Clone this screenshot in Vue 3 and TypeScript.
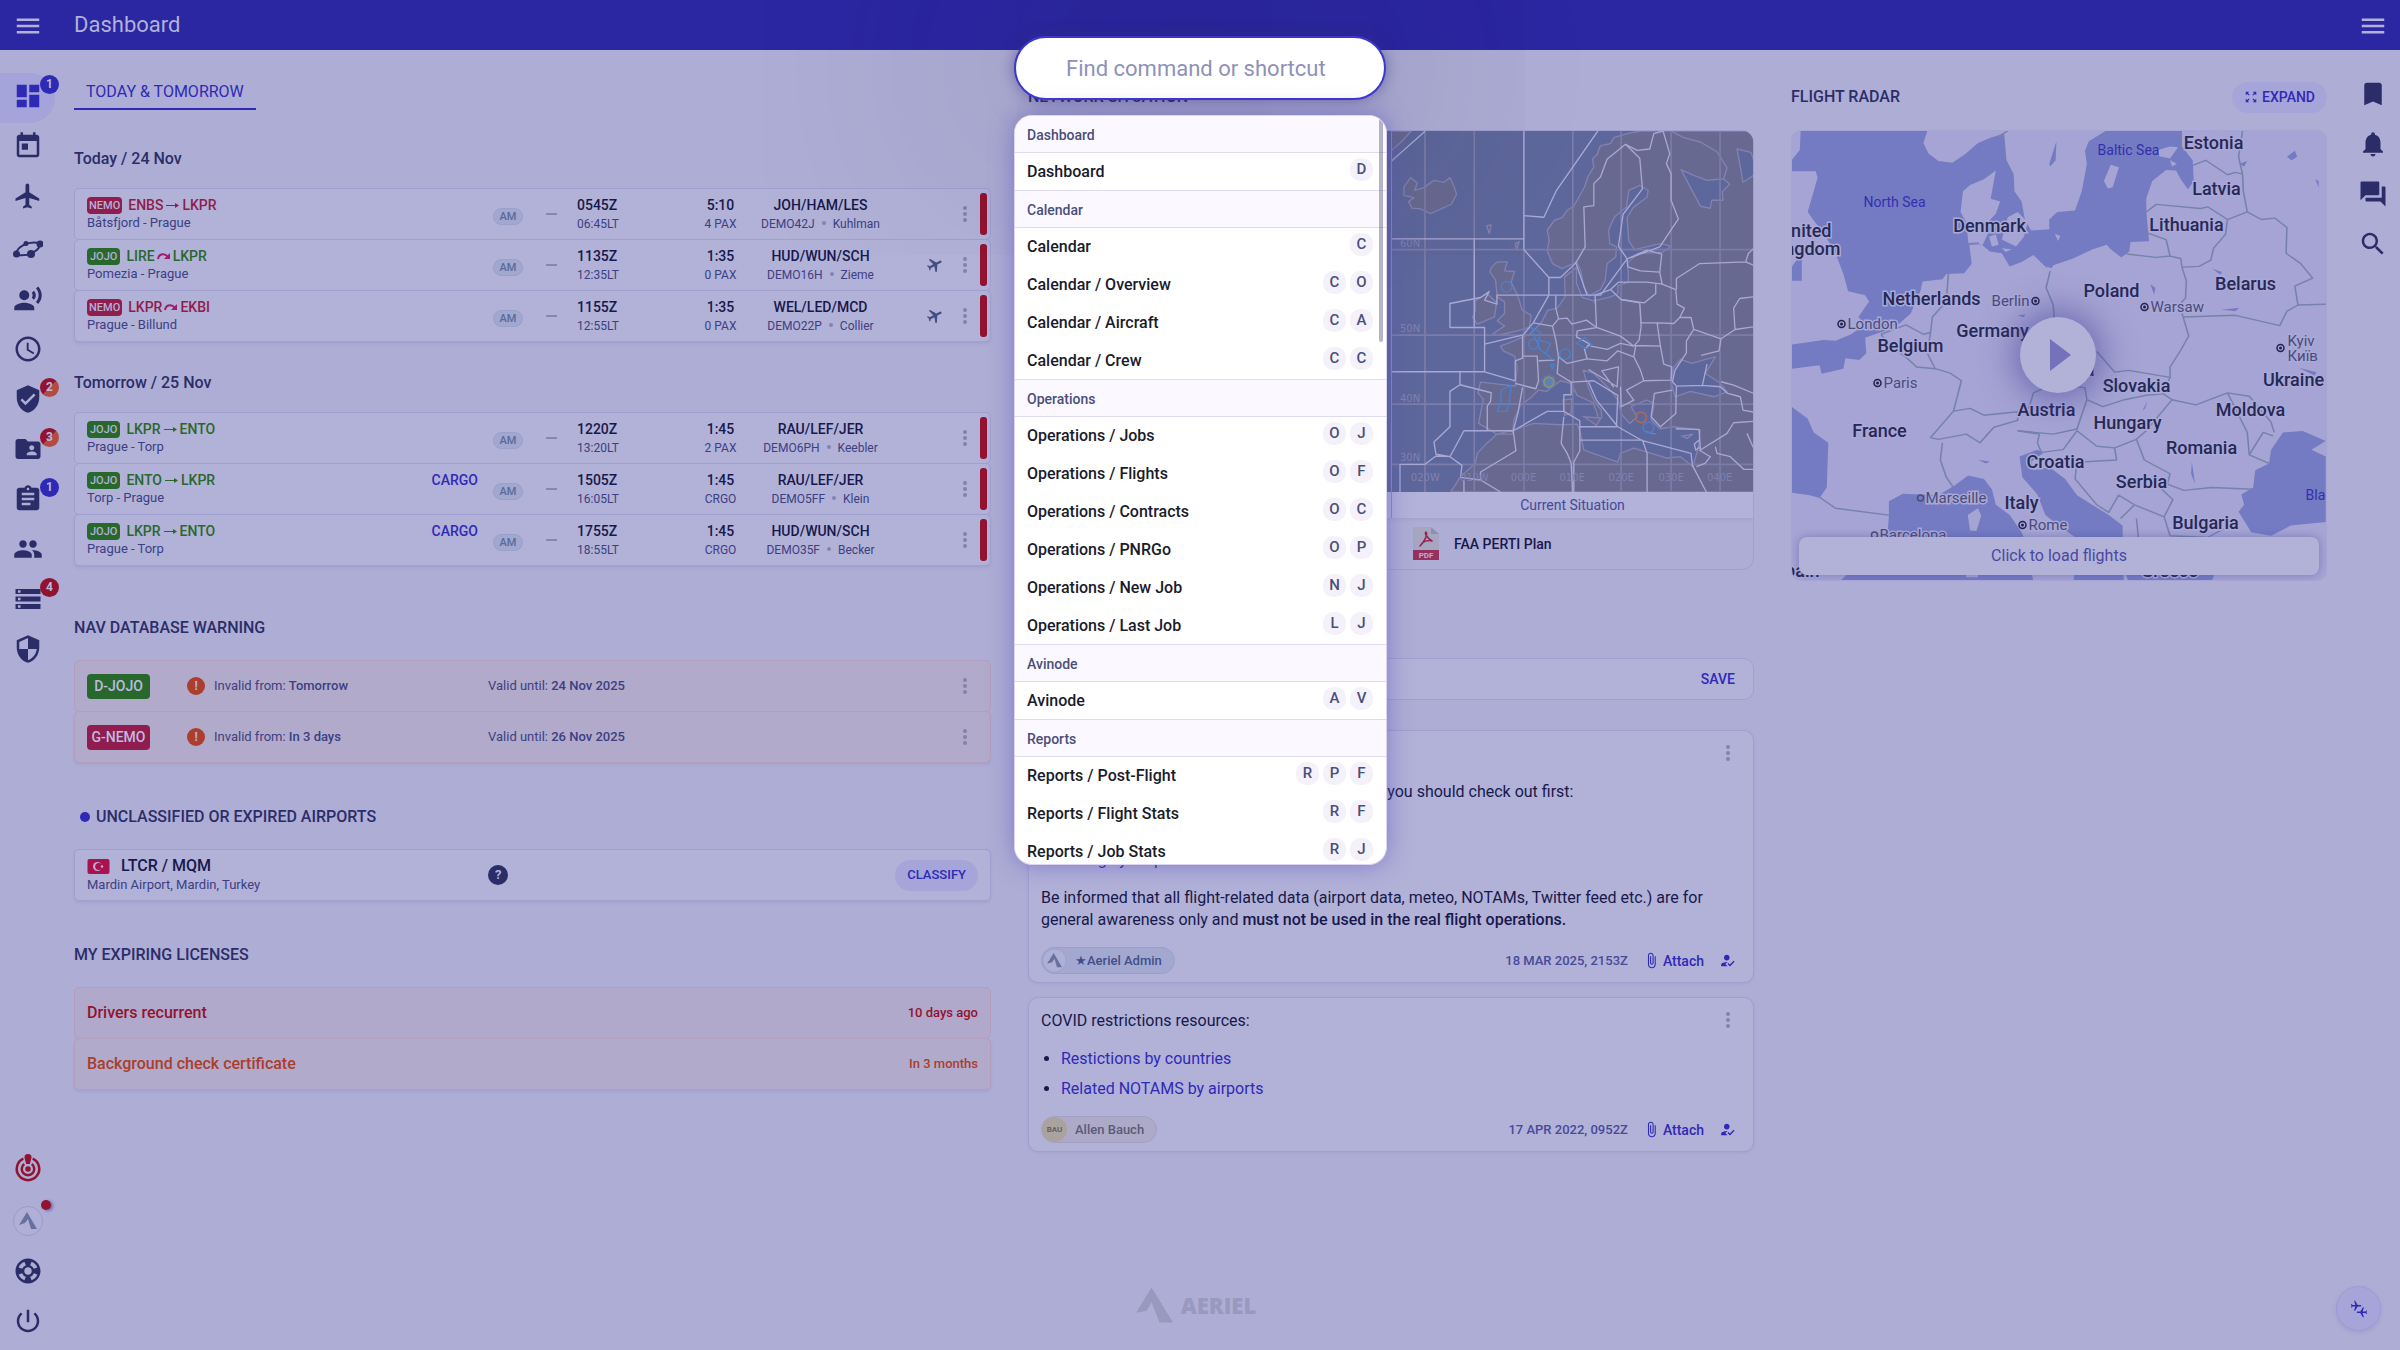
<script setup lang="ts">
import { ref } from 'vue'

interface NavItem { label: string; icon: string; badge?: string; tone?: string; active?: boolean; tall?: boolean }
interface Flight {
  tail: string; from: string; to: string; hop?: boolean; route: string; cargo?: boolean
  utc: string; local: string; length: string; load: string; crew: string; call: string; captain: string; plane?: boolean
}
interface Day { title: string; flights: Flight[] }
interface Command { label: string; keys: string[] }
interface Group { title: string; items: Command[] }
interface Label { text: string; x: number; y: number; kind: string; anchor?: 'start' | 'middle' | 'end' }

const query = ref('')

const icons: Record<string, string> = {
  menu: 'M3 18h18v-2H3v2zm0-5h18v-2H3v2zm0-7v2h18V6H3z',
  dashboard: 'M3 13h8V3H3v10zm0 8h8v-6H3v6zm10 0h8V11h-8v10zm0-18v6h8V3h-8z',
  today: 'M19 3h-1V1h-2v2H8V1H6v2H5c-1.11 0-1.99.9-1.99 2L3 19c0 1.1.89 2 2 2h14c1.1 0 2-.9 2-2V5c0-1.1-.9-2-2-2zm0 16H5V8h14v11zM7 10h5v5H7z',
  flight: 'M21 16v-2l-8-5V3.5c0-.83-.67-1.5-1.5-1.5S10 2.67 10 3.5V9l-8 5v2l8-2.5V19l-2 1.5V22l3.5-1 3.5 1v-1.5L13 19v-5.5l8 2.5z',
  voice: 'M9 5a4 4 0 1 0 0 8 4 4 0 0 0 0-8zM9 15c-2.67 0-8 1.34-8 4v2h16v-2c0-2.66-5.33-4-8-4zm7.76-9.64l-1.68 1.69c.84 1.18.84 2.71 0 3.89l1.68 1.69c2.02-2.02 2.02-5.07 0-7.27zM20.07 2l-1.63 1.63c2.77 3.02 2.77 7.56 0 10.74L20.07 16c3.9-3.89 3.91-9.95 0-14z',
  clock: 'M11.99 2C6.47 2 2 6.48 2 12s4.47 10 9.99 10C17.52 22 22 17.52 22 12S17.52 2 11.99 2zM12 20c-4.42 0-8-3.58-8-8s3.58-8 8-8 8 3.58 8 8-3.58 8-8 8zm.5-13H11v6l5.25 3.15.75-1.23-4.5-2.67z',
  verified: 'M12 1L3 5v6c0 5.55 3.84 10.74 9 12 5.16-1.26 9-6.45 9-12V5l-9-4zm-2 16l-4-4 1.41-1.41L10 14.17l6.59-6.59L18 9l-8 8z',
  folder: 'M20 6h-8l-2-2H4c-1.1 0-1.99.9-1.99 2L2 18c0 1.1.9 2 2 2h16c1.1 0 2-.9 2-2V8c0-1.1-.9-2-2-2zm-5 3c1.1 0 2 .9 2 2s-.9 2-2 2-2-.9-2-2 .9-2 2-2zm4 8h-8v-1c0-1.33 2.67-2 4-2s4 .67 4 2v1z',
  tasks: 'M19 3h-4.18C14.4 1.84 13.3 1 12 1c-1.3 0-2.4.84-2.82 2H5c-1.1 0-2 .9-2 2v14c0 1.1.9 2 2 2h14c1.1 0 2-.9 2-2V5c0-1.1-.9-2-2-2zm-7 0c.55 0 1 .45 1 1s-.45 1-1 1-1-.45-1-1 .45-1 1-1zm2 14H7v-2h7v2zm3-4H7v-2h10v2zm0-4H7V7h10v2z',
  people: 'M16 11c1.66 0 2.99-1.34 2.99-3S17.66 5 16 5c-1.66 0-3 1.34-3 3s1.34 3 3 3zm-8 0c1.66 0 2.99-1.34 2.99-3S9.66 5 8 5C6.34 5 5 6.34 5 8s1.34 3 3 3zm0 2c-2.33 0-7 1.17-7 3.5V19h14v-2.5c0-2.33-4.67-3.5-7-3.5zm8 0c-.29 0-.62.02-.97.05 1.16.84 1.97 1.97 1.97 3.45V19h6v-2.5c0-2.33-4.67-3.5-7-3.5z',
  storage: 'M2 20h20v-4H2v4zm2-3h2v2H4v-2zM2 4v4h20V4H2zm4 3H4V5h2v2zm-4 7h20v-4H2v4zm2-3h2v2H4v-2z',
  security: 'M12 1L3 5v6c0 5.55 3.84 10.74 9 12 5.16-1.26 9-6.45 9-12V5l-9-4zm0 10.99h7c-.53 4.12-3.28 7.79-7 8.94V12H5V6.3l7-3.11v8.8z',
  bookmark: 'M17 3H7c-1.1 0-1.99.9-1.99 2L5 21l7-3 7 3V5c0-1.1-.9-2-2-2z',
  bell: 'M12 22c1.1 0 2-.9 2-2h-4c0 1.1.89 2 2 2zm6-6v-5c0-3.07-1.64-5.64-4.5-6.32V4c0-.83-.67-1.5-1.5-1.5s-1.5.67-1.5 1.5v.68C7.63 5.36 6 7.92 6 11v5l-2 2v1h16v-1l-2-2z',
  chat: 'M21 6h-2v9H6v2c0 .55.45 1 1 1h11l4 4V7c0-.55-.45-1-1-1zm-4 6V3c0-.55-.45-1-1-1H3c-.55 0-1 .45-1 1v14l4-4h10c.55 0 1-.45 1-1z',
  search: 'M15.5 14h-.79l-.28-.27C15.41 12.59 16 11.11 16 9.5 16 5.91 13.09 3 9.5 3S3 5.91 3 9.5 5.91 16 9.5 16c1.61 0 3.09-.59 4.23-1.57l.27.28v.79l5 4.99L20.49 19l-4.99-5zm-6 0C7.01 14 5 11.99 5 9.5S7.01 5 9.5 5 14 7.01 14 9.5 11.99 14 9.5 14z',
  power: 'M13 3h-2v10h2V3zm4.83 2.17l-1.42 1.42C17.99 7.86 19 9.81 19 12c0 3.87-3.13 7-7 7s-7-3.13-7-7c0-2.19 1.01-4.14 2.58-5.42L6.17 5.17C4.23 6.82 3 9.26 3 12c0 4.97 4.03 9 9 9s9-4.03 9-9c0-2.74-1.23-5.18-3.17-6.83z',
  help: 'M12 2C6.48 2 2 6.48 2 12s4.48 10 10 10 10-4.48 10-10S17.52 2 12 2zm7.46 7.12l-2.78 1.15a4.98 4.98 0 0 0-2.95-2.94l1.15-2.78c2.1.8 3.77 2.47 4.58 4.57zM12 15c-1.66 0-3-1.34-3-3s1.34-3 3-3 3 1.34 3 3-1.34 3-3 3zM9.13 4.54l1.17 2.78a5 5 0 0 0-2.98 2.97L4.54 9.13a7.98 7.98 0 0 1 4.59-4.59zM4.54 14.87l2.78-1.15a4.97 4.97 0 0 0 2.97 2.96l-1.17 2.78a7.96 7.96 0 0 1-4.58-4.59zm10.34 4.59l-1.15-2.78a4.98 4.98 0 0 0 2.95-2.97l2.78 1.17a7.96 7.96 0 0 1-4.58 4.58z',
  expand: 'M15 3l2.3 2.3-2.89 2.87 1.42 1.42L18.7 6.7 21 9V3zM3 9l2.3-2.3 2.87 2.89 1.42-1.42L6.7 5.3 9 3H3zm6 12l-2.3-2.3 2.89-2.87-1.42-1.42L5.3 17.3 3 15v6zm12-6l-2.3 2.3-2.87-2.89-1.42 1.42 2.89 2.87L15 21h6z',
  clip: 'M16.5 6v11.5c0 2.21-1.79 4-4 4s-4-1.79-4-4V5a2.5 2.5 0 0 1 5 0v10.5c0 .55-.45 1-1 1s-1-.45-1-1V6H10v9.5a2.5 2.5 0 0 0 5 0V5c0-2.21-1.79-4-4-4S7 2.79 7 5v12.5c0 3.04 2.46 5.5 5.5 5.5s5.5-2.46 5.5-5.5V6h-1.5z',
  assign: 'M9 17l3-2.94c-.39-.04-.68-.06-1-.06-2.67 0-8 1.34-8 4v2h9l-3-3zm2-5c2.21 0 4-1.79 4-4s-1.79-4-4-4-4 1.79-4 4 1.79 4 4 4zM15.47 20.5L12 17l1.4-1.41 2.07 2.08 5.13-5.17 1.4 1.41z',
}

const nav: NavItem[] = [
  { label: 'Dashboard', icon: 'dashboard', badge: '1', tone: 'blue', active: true },
  { label: 'Calendar', icon: 'today' },
  { label: 'Flights', icon: 'flight' },
  { label: 'Rotations', icon: 'orbit', tall: true },
  { label: 'Crew briefing', icon: 'voice' },
  { label: 'Duty times', icon: 'clock' },
  { label: 'Compliance', icon: 'verified', badge: '2', tone: 'split' },
  { label: 'Documents', icon: 'folder', badge: '3', tone: 'split' },
  { label: 'Tasks', icon: 'tasks', badge: '1', tone: 'blue' },
  { label: 'Contacts', icon: 'people' },
  { label: 'Database', icon: 'storage', badge: '4', tone: 'red' },
  { label: 'Security', icon: 'security' },
]
const tools = [
  { label: 'Bookmarks', icon: 'bookmark' },
  { label: 'Notifications', icon: 'bell' },
  { label: 'Messages', icon: 'chat' },
  { label: 'Search', icon: 'search' },
]

const days: Day[] = [
  {
    title: 'Today / 24 Nov',
    flights: [
      { tail: 'NEMO', from: 'ENBS', to: 'LKPR', route: 'Båtsfjord - Prague', utc: '0545Z', local: '06:45LT', length: '5:10', load: '4 PAX', crew: 'JOH/HAM/LES', call: 'DEMO42J', captain: 'Kuhlman' },
      { tail: 'JOJO', from: 'LIRE', to: 'LKPR', hop: true, route: 'Pomezia - Prague', utc: '1135Z', local: '12:35LT', length: '1:35', load: '0 PAX', crew: 'HUD/WUN/SCH', call: 'DEMO16H', captain: 'Zieme', plane: true },
      { tail: 'NEMO', from: 'LKPR', to: 'EKBI', hop: true, route: 'Prague - Billund', utc: '1155Z', local: '12:55LT', length: '1:35', load: '0 PAX', crew: 'WEL/LED/MCD', call: 'DEMO22P', captain: 'Collier', plane: true },
    ],
  },
  {
    title: 'Tomorrow / 25 Nov',
    flights: [
      { tail: 'JOJO', from: 'LKPR', to: 'ENTO', route: 'Prague - Torp', utc: '1220Z', local: '13:20LT', length: '1:45', load: '2 PAX', crew: 'RAU/LEF/JER', call: 'DEMO6PH', captain: 'Keebler' },
      { tail: 'JOJO', from: 'ENTO', to: 'LKPR', route: 'Torp - Prague', cargo: true, utc: '1505Z', local: '16:05LT', length: '1:45', load: 'CRGO', crew: 'RAU/LEF/JER', call: 'DEMO5FF', captain: 'Klein' },
      { tail: 'JOJO', from: 'LKPR', to: 'ENTO', route: 'Prague - Torp', cargo: true, utc: '1755Z', local: '18:55LT', length: '1:45', load: 'CRGO', crew: 'HUD/WUN/SCH', call: 'DEMO35F', captain: 'Becker' },
    ],
  },
]

const databases = [
  { tail: 'D-JOJO', tone: 'green', from: 'Tomorrow', until: '24 Nov 2025' },
  { tail: 'G-NEMO', tone: 'crimson', from: 'In 3 days', until: '26 Nov 2025' },
]

const groups: Group[] = [
  { title: 'Dashboard', items: [{ label: 'Dashboard', keys: ['D'] }] },
  {
    title: 'Calendar',
    items: [
      { label: 'Calendar', keys: ['C'] },
      { label: 'Calendar / Overview', keys: ['C', 'O'] },
      { label: 'Calendar / Aircraft', keys: ['C', 'A'] },
      { label: 'Calendar / Crew', keys: ['C', 'C'] },
    ],
  },
  {
    title: 'Operations',
    items: [
      { label: 'Operations / Jobs', keys: ['O', 'J'] },
      { label: 'Operations / Flights', keys: ['O', 'F'] },
      { label: 'Operations / Contracts', keys: ['O', 'C'] },
      { label: 'Operations / PNRGo', keys: ['O', 'P'] },
      { label: 'Operations / New Job', keys: ['N', 'J'] },
      { label: 'Operations / Last Job', keys: ['L', 'J'] },
    ],
  },
  { title: 'Avinode', items: [{ label: 'Avinode', keys: ['A', 'V'] }] },
  {
    title: 'Reports',
    items: [
      { label: 'Reports / Post-Flight', keys: ['R', 'P', 'F'] },
      { label: 'Reports / Flight Stats', keys: ['R', 'F'] },
      { label: 'Reports / Job Stats', keys: ['R', 'J'] },
    ],
  },
]

const places: Label[] = [
  { text: 'North Sea', x: 103, y: 76, kind: 'sea' },
  { text: 'Baltic Sea', x: 337, y: 24, kind: 'sea' },
  { text: 'Black Sea', x: 514, y: 369, kind: 'sea', anchor: 'start' },
  { text: 'Estonia', x: 422, y: 18, kind: 'country' },
  { text: 'Latvia', x: 425, y: 64, kind: 'country' },
  { text: 'Lithuania', x: 395, y: 100, kind: 'country' },
  { text: 'Denmark', x: 198, y: 101, kind: 'country' },
  { text: 'United', x: 40, y: 106, kind: 'country', anchor: 'end' },
  { text: 'Kingdom', x: 49, y: 124, kind: 'country', anchor: 'end' },
  { text: 'Belarus', x: 454, y: 159, kind: 'country' },
  { text: 'Poland', x: 320, y: 166, kind: 'country' },
  { text: 'Netherlands', x: 140, y: 174, kind: 'country' },
  { text: 'Germany', x: 201, y: 206, kind: 'country' },
  { text: 'Belgium', x: 119, y: 221, kind: 'country' },
  { text: 'Czechia', x: 303, y: 245, kind: 'country', anchor: 'end' },
  { text: 'Slovakia', x: 345, y: 261, kind: 'country' },
  { text: 'Ukraine', x: 502, y: 255, kind: 'country' },
  { text: 'Austria', x: 255, y: 285, kind: 'country' },
  { text: 'Moldova', x: 459, y: 285, kind: 'country' },
  { text: 'Hungary', x: 336, y: 298, kind: 'country' },
  { text: 'France', x: 88, y: 306, kind: 'country' },
  { text: 'Romania', x: 410, y: 323, kind: 'country' },
  { text: 'Croatia', x: 264, y: 337, kind: 'country' },
  { text: 'Serbia', x: 350, y: 357, kind: 'country' },
  { text: 'Italy', x: 230, y: 378, kind: 'country' },
  { text: 'Bulgaria', x: 414, y: 398, kind: 'country' },
  { text: 'Spain', x: 28, y: 446, kind: 'country', anchor: 'end' },
  { text: 'Greece', x: 378, y: 446, kind: 'country' },
  { text: 'Berlin', x: 238, y: 175, kind: 'city', anchor: 'end' },
  { text: 'Warsaw', x: 359, y: 181, kind: 'city', anchor: 'start' },
  { text: 'London', x: 56, y: 198, kind: 'city', anchor: 'start' },
  { text: 'Kyiv', x: 496, y: 215, kind: 'city', anchor: 'start' },
  { text: 'Київ', x: 496, y: 230, kind: 'city', anchor: 'start' },
  { text: 'Paris', x: 92, y: 257, kind: 'city', anchor: 'start' },
  { text: 'Marseille', x: 134, y: 372, kind: 'city', anchor: 'start' },
  { text: 'Rome', x: 237, y: 399, kind: 'city', anchor: 'start' },
  { text: 'Barcelona', x: 88, y: 409, kind: 'city', anchor: 'start' },
]
const capitals = [[244, 170], [353, 176], [50, 193], [489, 217], [86, 252], [231, 394]]
const towns = [[129, 367], [83, 404]]
const meridians = [133, 281, 430, 577, 722, 872, 1019]
const parallels = [508, 765, 972, 1153]
const latitudes = [['60N', 500], ['50N', 757], ['40N', 965], ['30N', 1143]] as const
const longitudes = [['020W', 134], ['010W', 281], ['000E', 429], ['010E', 575], ['020E', 722], ['030E', 872], ['040E', 1018]] as const
</script>

<template>
  <div class="page">
    <header class="topbar">
      <button class="icon-btn" type="button" aria-label="Menu"><svg viewBox="0 0 24 24"><path :d="icons.menu" /></svg></button>
      <h1>Dashboard</h1>
      <button class="icon-btn" type="button" aria-label="More"><svg viewBox="0 0 24 24"><path :d="icons.menu" /></svg></button>
    </header>

    <div class="body">
      <nav class="rail" aria-label="Main">
        <a v-for="item in nav" :key="item.label" href="#" class="rail-item" :class="{ active: item.active, tall: item.tall }" :aria-label="item.label">
          <svg v-if="item.icon === 'orbit'" viewBox="0 0 30 30">
            <g fill="none" stroke="currentColor" stroke-width="2"><path d="M3 19C4 12 14 6 26 8M27 9c0 5-9 13-23 11" /></g>
            <circle cx="3.500" cy="19" r="3.500" /><circle cx="13" cy="8.500" r="2.500" /><circle cx="27" cy="9" r="3.500" /><circle cx="18" cy="19" r="4" />
          </svg>
          <svg v-else viewBox="0 0 24 24"><path :d="icons[item.icon]" /></svg>
          <span v-if="item.badge" class="count" :class="item.tone">{{ item.badge }}</span>
        </a>
        <div class="rail-end">
          <a href="#" class="rail-item alert" aria-label="Alerts">
            <svg viewBox="0 0 24 24">
              <path fill="none" stroke="currentColor" stroke-width="2" d="M8.300 3.700a9 9 0 1 0 7.400 0M9 8a5 5 0 1 0 6 0" />
              <path d="M12 0c-2 0-3 1.200-2.800 3L10.500 8h3L14.800 3C15 1.200 14 0 12 0z" /><circle cx="12" cy="12" r="2.200" />
            </svg>
          </a>
          <a href="#" class="rail-item me" aria-label="Profile">
            <svg class="avatar" viewBox="0 0 30 30"><circle cx="15" cy="15" r="14.500" /><path d="M14 6L6 19l6-2 3-4 3 10h6z" /></svg>
            <span class="dot"></span>
          </a>
          <a href="#" class="rail-item" aria-label="Help"><svg viewBox="0 0 24 24"><path :d="icons.help" /></svg></a>
          <a href="#" class="rail-item" aria-label="Log out"><svg viewBox="0 0 24 24"><path :d="icons.power" /></svg></a>
        </div>
      </nav>

      <div class="content">
        <main class="columns">
          <div class="col">
            <button class="tab" type="button">TODAY &amp; TOMORROW</button>
            <section v-for="day in days" :key="day.title" class="day">
              <h3>{{ day.title }}</h3>
              <ul class="rows">
                <li v-for="f in day.flights" :key="f.utc" class="row flight">
                  <div class="leg">
                    <div class="leg-top" :class="f.tail === 'JOJO' ? 'green' : 'crimson'">
                      <span class="tail">{{ f.tail }}</span>
                      <span>{{ f.from }}</span>
                      <svg v-if="f.hop" class="hop" viewBox="0 0 14 10"><path d="M1 8C2 2 8 2 11 6" fill="none" stroke="currentColor" stroke-width="2" /><path d="M13 2v6H7z" /></svg>
                      <svg v-else class="arrow" viewBox="0 0 13 9"><path d="M0 4.500h12" stroke="currentColor" /><path d="M9 2l4 2.500L9 7z" /></svg>
                      <span>{{ f.to }}</span>
                      <span v-if="f.cargo" class="cargo">CARGO</span>
                    </div>
                    <div class="sub">{{ f.route }}</div>
                  </div>
                  <span class="am">AM</span>
                  <span class="dash"></span>
                  <div class="cell"><b>{{ f.utc }}</b><span>{{ f.local }}</span></div>
                  <div class="cell mid"><b>{{ f.length }}</b><span>{{ f.load }}</span></div>
                  <div class="cell mid"><b>{{ f.crew }}</b><span class="pair">{{ f.call }}<i></i>{{ f.captain }}</span></div>
                  <div class="kind"><svg v-if="f.plane" viewBox="0 0 24 24"><path transform="rotate(62 12 12)" :d="icons.flight" /></svg></div>
                  <button class="more" type="button" aria-label="Flight menu"><i></i><i></i><i></i></button>
                  <span class="bar"></span>
                </li>
              </ul>
            </section>

            <section class="first">
              <h2>NAV DATABASE WARNING</h2>
              <ul class="rows">
                <li v-for="d in databases" :key="d.tail" class="row warn">
                  <span class="reg" :class="d.tone">{{ d.tail }}</span>
                  <span class="bang">!</span>
                  <span class="note">Invalid from: <b>{{ d.from }}</b></span>
                  <span class="note">Valid until: <b>{{ d.until }}</b></span>
                  <button class="more" type="button" aria-label="Database menu"><i></i><i></i><i></i></button>
                </li>
              </ul>
            </section>

            <section>
              <h2 class="marked">UNCLASSIFIED OR EXPIRED AIRPORTS</h2>
              <ul class="rows">
                <li class="row airport">
                  <div class="place">
                    <div class="place-top">
                      <svg class="flag" viewBox="0 0 22 15"><rect width="22" height="15" rx="2" fill="#a9124d" /><circle cx="10" cy="7.500" r="4.500" fill="#b9aed3" /><circle cx="11.300" cy="7.500" r="3.600" fill="#a9124d" /><circle cx="14.500" cy="7.500" r="1.300" fill="#b9aed3" /></svg>
                      <b>LTCR / MQM</b>
                    </div>
                    <span>Mardin Airport, Mardin, Turkey</span>
                  </div>
                  <span class="query">?</span>
                  <button class="pill small" type="button">CLASSIFY</button>
                </li>
              </ul>
            </section>

            <section>
              <h2>MY EXPIRING LICENSES</h2>
              <ul class="rows">
                <li class="row license overdue"><span>Drivers recurrent</span><b>10 days ago</b></li>
                <li class="row license"><span>Background check certificate</span><b>In 3 months</b></li>
              </ul>
            </section>
          </div>

          <div class="col">
            <div class="head"><h2>NETWORK SITUATION</h2></div>
            <div class="situation">
              <div class="maps">
                <figure><div class="chart blank"></div><figcaption></figcaption></figure>
                <figure>
                  <svg class="chart" viewBox="32 152 1088 1084" preserveAspectRatio="xMidYMid slice">
                    <rect x="0" y="100" width="1200" height="1200" fill="#5e679b" />
                    <g fill="#676990" stroke="#8381b2" stroke-width="4" stroke-linejoin="round">
                      <path d="M32 152H92L62 185L32 210Z" />
                      <path d="M70 320L90 292L110 308L102 330L130 322L160 300L190 306L208 292L220 318L228 342L212 372L150 400L118 385L94 384L84 364L100 352L70 346Z" />
                      <path d="M318 436L332 434L326 460ZM404 490L416 484L408 508Z" />
                      <path d="M350 545L380 545L372 572L402 574L392 606L412 648L425 690L452 705L446 742L410 752L350 766L338 760L372 738L350 722L372 700L372 665L350 650L345 600L328 575L334 560Z" />
                      <path d="M284 662L320 640L348 668L342 710L290 732L276 712L284 690Z" />
                      <path d="M1120 152H780L740 160L700 172L690 190L660 196L650 222L636 236L640 260L622 290L612 320L600 342L580 378L560 390L545 412L522 420L500 450L506 480L500 512L516 550L545 565L588 545L600 568L610 622L626 648L660 628L674 600L680 550L706 530L708 500L688 490L684 450L702 410L738 380L745 330L778 315L803 330L800 350L758 382L740 412L745 482L762 508L840 490L872 498L846 516L772 520L742 548L744 606L712 616L712 640L690 650L640 662L606 652L588 610L588 562L552 590L554 650L530 684L502 690L482 728L448 762L400 782L360 798L368 812L402 828L410 862L404 918L300 906L292 938L308 958L294 1030L330 1050L346 1062L396 1062L400 1020L420 975L448 955L474 930L498 934L540 902L572 910L590 946L638 968L650 1000L654 1024L664 1012L662 990L640 960L622 918L608 870L640 880L690 930L712 960L724 1004L748 1030L770 1010L752 980L798 960L822 970L812 1020L838 1046L880 1040L960 1050L954 1100L938 1160L900 1130L860 1134L760 1104L720 1120L712 1146L610 1110L600 1060L590 1032L540 1034L460 1030L398 1050L350 1062L318 1090L290 1120L284 1150L240 1190L210 1236H1120Z" />
                    </g>
                    <g fill="#5e679b" stroke="#8381b2" stroke-width="4" stroke-linejoin="round">
                      <path d="M902 268L940 285L980 300L1030 296L1048 312L1026 334L1028 360L994 360L990 384L960 378L940 340Z" />
                      <path d="M1070 206L1112 216L1120 240V285L1088 306L1080 260Z" />
                      <path d="M872 905L880 862L900 838L935 850L975 838L1005 830L975 880L1018 908L1040 935L1000 950L930 934L884 950Z" />
                    </g>
                    <path d="M610 1010L660 1014L648 1036ZM548 960L574 956L572 1000L552 1005ZM905 1068L938 1062L920 1075ZM795 1055L825 1062" fill="#676990" stroke="#8381b2" stroke-width="4" />
                    <path d="M870 152L910 172L960 185L1010 215L1040 262L1030 296" fill="none" stroke="#8381b2" stroke-width="4" />
                    <g stroke="#7c7ca8" stroke-width="5">
                      <path v-for="m in meridians" :key="m" :d="`M${m} 152V1236`" />
                      <path v-for="p in parallels" :key="p" :d="`M32 ${p}H1120`" />
                    </g>
                    <g fill="none" stroke="#a9a8d5" stroke-width="4" stroke-linejoin="round">
                      <path d="M32 243L134 152M32 476H430M281 476V645M281 508V740M430 152V508L505 592H540L586 548L620 645M430 406L490 411L528 330L652 152M505 592V645H660L740 536L714 498L728 402L786 326L778 234L735 192L700 220L680 236L660 290L640 310V376L610 380L614 500L586 548" />
                      <path d="M735 192L770 210L808 206L820 160L848 152L868 220L858 250L872 280V360L894 416L838 500L740 536L742 560L780 572L838 576L844 522L800 510L740 536M838 576L845 612L800 606H714L690 628L722 658L792 668L826 640L826 612" />
                      <path d="M845 612L886 628L890 672L912 684L898 712L932 712L940 748L1022 776L1016 812L962 826M888 628V595L958 550L1096 545L1120 555M1096 545L1104 520L1120 505M1120 650L1078 655L1060 684L1064 748L1022 776M1064 748L1120 740" />
                      <path d="M349 645H505L458 728L428 764L312 792V742H208V670L300 652L326 634L312 660L349 672ZM312 792V875H32M312 875L404 902V842L426 834V764M426 828H470L474 902L466 926L404 910M238 875V914L332 938L330 964L320 978V1054M238 914L208 934V1040L160 1086L166 1122L208 1130L250 1052L398 1052L500 994H550L598 1022V1112L580 1146V1236M426 922L412 1000L398 1052L406 1112L300 1176V1200L360 1236M134 1152L166 1128L208 1130L244 1156L240 1192L300 1200M58 1236V1153H134M250 1236V1200" />
                      <path d="M526 645V684L534 716L560 714L574 732L618 720L648 742L644 645M458 728L516 738L526 780L534 830L560 850L620 836L612 808L628 792L588 770L590 752L648 742L720 768L760 798L720 790L680 808L620 796M534 716L516 738M644 670V645L690 628M760 798L776 780L782 740L778 668L722 658M778 668L782 728L830 728L880 730L898 712M830 728L840 798L766 796L760 830L780 870L790 902L872 900L874 860L850 852L840 798M940 748L918 782V818L884 870L876 905L888 918L886 1000L840 1040L812 1010L822 940L876 930" />
                      <path d="M620 836L680 842L712 812L760 830M534 830L530 880L572 906V944H550V994M474 842L522 840M572 906L640 902L712 946L708 1040H598M624 868L710 920L714 860L664 872L700 922M624 906L648 960L712 1040L786 1082L932 1120L936 1156L978 1236M598 1080H786L800 1120V1236M720 920L722 980L760 960L738 930L790 902M886 1046L956 1048L960 1110L1040 1060L1060 1028L1120 1024M888 918L966 916L980 852M966 916L1020 920L1042 940L1080 950L1088 990L1120 996M1022 905L1060 915L1120 940M956 1080L942 1092L946 1110L960 1100M1005 1100L1010 1120L1050 1130L1090 1168H1120M948 1160L974 1150L990 1130L956 1110M1100 1060L1120 1105" />
                      <path d="M550 1010L542 1090L560 1120L572 1150L576 1236" />
                    </g>
                    <g fill="none" stroke="#4a80d0" stroke-width="4">
                      <circle cx="378" cy="620" r="16" /><circle cx="459" cy="792" r="15" /><circle cx="554" cy="822" r="16" /><circle cx="804" cy="1042" r="16" />
                      <path d="M452 742L480 756L474 780L510 790L496 820L518 838L480 810L462 770ZM588 790L612 772L634 794L618 806ZM510 854H522L516 866ZM362 930L392 916L388 950L380 994H350L360 968Z" />
                      <circle cx="505" cy="905" r="20" stroke-dasharray="10 5" />
                    </g>
                    <circle cx="505" cy="906" r="15" fill="#5c82b4" stroke="#9a9064" stroke-width="5" />
                    <circle cx="782" cy="1012" r="16" fill="none" stroke="#a96b5e" stroke-width="5" />
                    <g class="grid-label">
                      <text v-for="[t, y] in latitudes" :key="t" x="58" :y="y">{{ t }}</text>
                      <text v-for="[t, x] in longitudes" :key="t" :x="x" y="1202" text-anchor="middle">{{ t }}</text>
                    </g>
                  </svg>
                  <figcaption>Current Situation</figcaption>
                </figure>
              </div>
              <a href="#" class="pdf">
                <svg viewBox="0 0 26 33">
                  <path d="M0 0h18l8 7v16H0z" fill="#a6a6c2" /><path d="M18 0l8 7h-8z" fill="#9090ae" /><path d="M0 23h26v10H0z" fill="#96315f" />
                  <path d="M13 5c-2 1 1 6 6 9M13 5c2 2-1 9-6 14M9 16c3-2 7-3 10-2" fill="none" stroke="#97234d" stroke-width="1.500" stroke-linecap="round" />
                  <text x="13" y="31" text-anchor="middle">PDF</text>
                </svg>
                FAA PERTI Plan
              </a>
            </div>

            <div class="compose"><button type="button">SAVE</button></div>

            <article class="post intro">
              <button class="more" type="button" aria-label="Post menu"><i></i><i></i><i></i></button>
              <p>Welcome to Aeriel. There are a few useful things you should check out first:</p>
              <ul><li><a href="#">Update your profile</a></li><li><a href="#">Change your password</a></li></ul>
              <p>Be informed that all flight-related data (airport data, meteo, NOTAMs, Twitter feed etc.) are for general awareness only and <b>must not be used in the real flight operations.</b></p>
              <footer>
                <span class="who admin"><svg viewBox="0 0 30 30"><circle cx="15" cy="15" r="14" /><path d="M14 6L6 19l6-2 3-4 3 10h6z" /></svg>★Aeriel Admin</span>
                <time>18 MAR 2025, 2153Z</time>
                <button type="button"><svg viewBox="0 0 24 24"><path :d="icons.clip" /></svg>Attach</button>
                <button type="button" aria-label="Assign"><svg viewBox="0 0 24 24"><path :d="icons.assign" /></svg></button>
              </footer>
            </article>

            <article class="post">
              <button class="more" type="button" aria-label="Post menu"><i></i><i></i><i></i></button>
              <p>COVID restrictions resources:</p>
              <ul><li><a href="#">Restictions by countries</a></li><li><a href="#">Related NOTAMS by airports</a></li></ul>
              <footer>
                <span class="who allen"><em>BAU</em>Allen Bauch</span>
                <time>17 APR 2022, 0952Z</time>
                <button type="button"><svg viewBox="0 0 24 24"><path :d="icons.clip" /></svg>Attach</button>
                <button type="button" aria-label="Assign"><svg viewBox="0 0 24 24"><path :d="icons.assign" /></svg></button>
              </footer>
            </article>
          </div>

          <div class="col">
            <div class="head">
              <h2>FLIGHT RADAR</h2>
              <button class="pill" type="button"><svg viewBox="0 0 24 24"><path :d="icons.expand" /></svg>EXPAND</button>
            </div>
            <div class="radar">
              <svg class="terrain" viewBox="0 0 535 449" preserveAspectRatio="xMidYMid slice">
                <g transform="scale(.396 .3445) translate(-29 -205)">
                  <g fill="#747bc2">
                    <path d="M52 205H372L362 240L375 270L400 292L435 297L468 272L500 240L530 225L566 212L572 290L590 330L592 380L610 410L618 460L634 494L680 490L680 462L700 440L745 436L762 380L775 300L770 262L780 235L822 205H1015V250L1042 290L1045 350L1030 374L1012 345L1000 320L975 318L940 350L925 400V440L932 525L885 527L882 555L862 572L835 548L825 535L790 548L740 575L690 595L682 612L640 565L610 585L580 598L560 560L530 555L510 535H478L484 590L465 618L420 620L410 635L360 642L355 668L330 735L300 765L265 785L215 805L218 850L200 870L165 865L160 895L105 910L100 885L29 895V825L110 812L140 814L180 795L215 765L198 745L225 700L215 682L172 670L160 620L140 560L110 500L85 465L70 440L95 340L90 322H29V290L50 260Z" />
                    <path d="M29 1005L70 1040L85 1080L122 1110L118 1240L100 1270L75 1262L29 1255Z" />
                    <path d="M275 1320V1280L310 1258L400 1262L440 1235L475 1205L515 1215L535 1245L545 1290L580 1320L610 1370L620 1395L640 1514H150L170 1490L200 1440L270 1400Z" />
                    <path d="M605 1150L650 1130L665 1140L634 1165L640 1190L680 1180L720 1215L750 1262L830 1320L865 1350L868 1514H740L760 1395L715 1360L670 1320L650 1260L612 1210Z" />
                    <path d="M1240 1130L1270 1080L1320 1076L1378 1105L1342 1130L1378 1150V1340L1290 1350L1240 1380L1190 1370L1158 1310L1172 1290L1165 1260L1195 1240L1200 1190L1235 1170Z" />
                    <path d="M870 1480H1100L1090 1514H880ZM680 300L698 235L696 290L682 308ZM755 430L775 352L770 400ZM1280 280L1300 262L1306 280L1292 290ZM1160 300L1180 292L1172 308ZM29 600L55 560V640H29ZM1302 235L1290 265ZM1310 892L1355 905L1350 915ZM1352 345L1360 350V370ZM600 740L620 738L615 746ZM935 650L948 660L945 680ZM1115 724L1160 718L1150 728ZM500 1160L530 1164L520 1170ZM1040 1165L1038 1200L1048 1230ZM1092 605L1116 614L1112 622ZM915 1018L928 988L922 1010Z" />
                  </g>
                  <g fill="#a5a4d4">
                    <path d="M545 320L515 345L480 362L462 380L456 440L470 470L476 532L512 535L526 500L518 478L545 445L556 410L532 402Z" />
                    <path d="M560 520L575 455L600 440L626 470L616 512L596 540ZM528 512L545 505L552 535L535 540ZM560 545L585 548L570 556Z" />
                    <path d="M835 303L856 310L840 368L828 372L818 350ZM955 260L985 250L1005 252L985 285L958 278ZM985 290L1002 300L990 308ZM694 503L708 510L702 524ZM500 1300L508 1322L496 1366L480 1365L474 1320ZM470 1500L475 1400L500 1395L500 1500ZM672 598L690 605L680 614Z" />
                  </g>
                  <g fill="none" stroke="#7682a9" stroke-width="4" stroke-linejoin="round">
                    <path d="M550 222L575 205M1168 205L1158 280L1168 330L1150 325L1130 332L1075 290L1042 305M1168 330L1170 380L1180 440L1130 462L1080 425L1062 430L950 418L925 440M1180 440L1215 462L1250 458L1280 485L1278 560L1315 590L1345 632L1300 655L1308 710L1378 708M1130 462L1125 505L1095 545L1088 580L1058 598L1015 600L1012 575L985 568L975 520L925 500M985 568L950 572L875 562M1015 600L1026 640L1024 690L1008 710L1018 745L1150 740L1262 770L1280 728L1308 710M1018 745L1032 800L1010 845L985 890V920" />
                    <path d="M682 612L672 660L690 710L692 748M476 532L502 530M425 620L420 700L385 745L380 790L362 795L318 768L255 795M380 790L372 850L392 895L430 908L458 930L438 1018L480 1010L515 1030L600 1020L600 1045L540 1065L505 1110L470 1085L400 1100L380 1095L438 1018M255 795L278 830L318 862L345 890L392 895M800 845L845 905L880 900L985 920L968 968L925 972L870 985L815 1005L775 985L770 950L690 940L640 965L628 1010L600 1020M775 985L760 1035L750 1070L690 1085L600 1075" />
                    <path d="M600 1075L655 1085L650 1110L660 1138L715 1130L750 1075L800 1120L845 1125L900 1100L925 1075L990 985L1050 1000L1130 965L1185 975L1240 1050L1248 1080M990 985L968 968M1130 965L1180 1080L1185 1145L1235 1170M1185 1145L1220 1080L1245 1090M845 1125L850 1160L770 1165M900 1100L920 1160L985 1200L978 1230L1020 1248L1090 1240L1195 1245M750 1165L745 1215L800 1290L830 1312L855 1262L895 1290L970 1325L992 1275L955 1235M895 1290L860 1330M900 1330L905 1385M970 1325L985 1380L1080 1385L1120 1360M410 1110L405 1160L420 1210L438 1240M100 1268L140 1300L275 1320" />
                  </g>
                </g>
                <g fill="none" stroke="#22224f" stroke-width="1.500">
                  <circle v-for="[x, y] in capitals" :key="x" :cx="x" :cy="y" r="3.500" />
                  <circle v-for="[x, y] in towns" :key="x" :cx="x" :cy="y" r="3" stroke="#4c4d7c" />
                </g>
                <circle v-for="[x, y] in capitals" :key="x" :cx="x" :cy="y" r="1.500" fill="#22224f" />
                <text v-for="p in places" :key="p.text" :x="p.x" :y="p.y" :class="p.kind" :text-anchor="p.anchor ?? 'middle'">{{ p.text }}</text>
              </svg>
              <button class="play" type="button" aria-label="Play"><svg viewBox="0 0 24 34"><path d="M1 1l21 16L1 33z" /></svg></button>
              <button class="load" type="button">Click to load flights</button>
            </div>
          </div>
        </main>
        <footer class="brand">
          <svg viewBox="0 0 38 36"><path d="M16 0L0 26l11-2 5-9 8 21h14z" /></svg>
          <span>AERIEL</span>
        </footer>
      </div>

      <nav class="rail tools" aria-label="Tools">
        <a v-for="t in tools" :key="t.label" href="#" class="rail-item" :aria-label="t.label"><svg viewBox="0 0 24 24"><path :d="icons[t.icon]" /></svg></a>
      </nav>
    </div>

    <button class="fab" type="button" aria-label="Assistant">
      <svg viewBox="0 0 24 24">
        <path transform="translate(16 1) rotate(90) scale(.62)" :d="icons.flight" />
        <path transform="translate(8 23) rotate(-90) scale(.62)" :d="icons.flight" />
      </svg>
    </button>

    <div class="palette" role="dialog" aria-label="Command palette">
      <input v-model="query" class="find" type="text" placeholder="Find command or shortcut" aria-label="Find command or shortcut" />
      <div class="results">
        <div class="list">
          <section v-for="g in groups" :key="g.title" class="group">
            <h4>{{ g.title }}</h4>
            <button v-for="c in g.items" :key="c.label" type="button" class="command">
              <span>{{ c.label }}</span>
              <span class="keys"><kbd v-for="(k, i) in c.keys" :key="i">{{ k }}</kbd></span>
            </button>
          </section>
        </div>
        <span class="scroll"></span>
      </div>
    </div>
  </div>
</template>

<style>
body {
  margin: 0;
  background: #aeadd5;
}
</style>

<style scoped>
* {
  box-sizing: border-box;
}
.page {
  --navy: #2b2d68;
  --ink: #17194c;
  --muted: #3c3f82;
  --blue: #2f2ab6;
  --red: #92132f;
  --green: #29682d;
  --crimson: #901d4d;
  --card: #b2b1d8;
  --line: #a09fd2;
  display: flex;
  flex-direction: column;
  min-height: 100vh;
  overflow: hidden;
  position: relative;
  background: #aeadd5;
  color: var(--ink);
  font-family: Roboto, "Liberation Sans", sans-serif;
  font-size: 14px;
  line-height: 20px;
}
button {
  border: 0;
  padding: 0;
  background: none;
  color: inherit;
  font: inherit;
  cursor: pointer;
}
a {
  color: inherit;
  text-decoration: none;
}
h1, h2, h3, h4, p, ul, figure {
  margin: 0;
  padding: 0;
}
ul {
  list-style: none;
}
svg {
  fill: currentColor;
  flex: none;
}
b {
  font-weight: 500;
}
.green {
  color: var(--green);
}
.crimson {
  color: var(--crimson);
}

.topbar {
  display: flex;
  align-items: center;
  height: 50px;
  background: #2b26a2;
  color: #b2b1d8;
}
.topbar h1 {
  flex: 1;
  padding-left: 19px;
  font-size: 22px;
  font-weight: 400;
}
.icon-btn {
  width: 55px;
  height: 50px;
}
.icon-btn svg {
  display: block;
  width: 30px;
  height: 30px;
  margin: 2px auto 0;
}

.body {
  display: flex;
  flex: 1;
}
.rail {
  display: flex;
  flex-direction: column;
  width: 55px;
  padding-top: 23px;
  color: var(--navy);
}
.rail-item {
  display: flex;
  justify-content: center;
  position: relative;
  height: 50px;
  padding-top: 8px;
}
.rail-item.tall {
  height: 53px;
}
.rail-item.tall svg {
  margin-top: 4px;
}
.rail-item.active {
  border-radius: 0 25px 25px 0;
  background: #a5a4da;
  color: var(--blue);
}
.rail-item svg {
  width: 30px;
  height: 30px;
}
.rail-end {
  margin-top: auto;
  padding-bottom: 2px;
}
.rail-item.alert {
  height: 52px;
  color: var(--red);
}
.avatar circle {
  fill: #b0afd7;
  stroke: #9c9bc6;
}
.avatar path,
.admin path {
  fill: #67719f;
}
.dot {
  position: absolute;
  top: 2px;
  right: 4px;
  width: 10px;
  height: 10px;
  border-radius: 50%;
  background: var(--red);
  box-shadow: 2px 1px 3px #6c6bb0;
}
.count {
  position: absolute;
  top: 2px;
  left: 40px;
  width: 19px;
  height: 19px;
  border-radius: 50%;
  background: var(--blue);
  color: #b9b8de;
  font-size: 12px;
  font-weight: 700;
  line-height: 19px;
  text-align: center;
}
.count.red {
  background: var(--red);
}
.count.split {
  background: linear-gradient(135deg, var(--red) 49%, #b44b40 51%);
}
.tools {
  padding-top: 21px;
}

.content {
  display: flex;
  flex: 1;
  flex-direction: column;
  padding: 23px 18px 0 19px;
  min-width: 0;
}
.columns {
  display: grid;
  grid-template-columns: 917fr 726fr 536fr;
  gap: 37px;
  align-items: start;
}
.tab {
  display: block;
  height: 37px;
  padding: 2px 12px 0;
  border-bottom: 2px solid var(--blue);
  color: var(--blue);
  font-size: 16px;
}
h2, h3 {
  color: var(--navy);
  font-size: 16px;
  font-weight: 500;
  line-height: 24px;
}
.day h3 {
  margin: 29px 0 17px;
}
.tab + .day h3 {
  margin-top: 37px;
}
section h2 {
  margin: 42px 0 20px;
}
section.first h2 {
  margin-top: 50px;
}
.marked::before {
  content: "";
  display: inline-block;
  width: 10px;
  height: 10px;
  margin: 0 6px;
  border-radius: 50%;
  background: var(--blue);
}
.row {
  display: flex;
  align-items: center;
  height: 52px;
  padding: 0 12px;
  border: 1px solid var(--line);
  border-radius: 5px;
  background: var(--card);
}
.row + .row {
  margin-top: -1px;
}
.row:last-child {
  box-shadow: 0 2px 3px #a3a2d0;
}
.flight {
  display: grid;
  grid-template-columns: 1fr 44px 40px 104px 79px 121px 69px 30px 7px;
  padding-right: 3px;
}
.leg-top {
  display: flex;
  align-items: center;
  height: 18px;
  font-weight: 500;
}
.tail {
  margin-right: 6px;
  padding: 0 2px;
  border-radius: 4px;
  background: var(--crimson);
  color: var(--card);
  font-size: 11px;
  line-height: 17px;
}
.green .tail {
  padding: 0 3px;
  background: var(--green);
}
.arrow {
  width: 13px;
  height: 9px;
  margin: 0 3px;
}
.hop {
  width: 14px;
  height: 10px;
  margin: 0 2px;
  color: #9b1f6c;
}
.cargo {
  margin: 0 15px 0 auto;
  color: var(--blue);
}
.sub {
  color: var(--muted);
  font-size: 13px;
  line-height: 18px;
}
.am {
  justify-self: start;
  width: 30px;
  margin-top: 4px;
  border: 1px solid #98a0cb;
  border-radius: 9px;
  background: #a1a7cf;
  color: #5a6a9b;
  font-size: 11px;
  font-weight: 500;
  line-height: 15px;
  text-align: center;
}
.dash {
  width: 11px;
  height: 2px;
  margin-left: 9px;
  background: #8685b4;
}
.cell {
  white-space: nowrap;
}
.cell b,
.cell span {
  display: block;
  line-height: 19px;
}
.cell span {
  color: var(--muted);
  font-size: 12px;
  line-height: 18px;
}
.cell.mid {
  text-align: center;
}
.pair i {
  display: inline-block;
  width: 4px;
  height: 4px;
  margin: 0 7px 3px;
  border-radius: 50%;
  background: #8382b5;
}
.kind {
  display: flex;
  justify-content: flex-end;
  padding-right: 6px;
  color: #434e80;
}
.kind svg {
  width: 18px;
  height: 18px;
}
.more {
  display: grid;
  justify-items: center;
  gap: 2px;
  width: 30px;
  color: #8381ae;
}
.more i {
  width: 4px;
  height: 4px;
  border-radius: 50%;
  background: currentColor;
}
.bar {
  height: 42px;
  border-radius: 3px;
  background: var(--red);
}

.warn,
.license {
  border-color: #b49dbd;
  background: #b1aacb;
}
.warn {
  display: grid;
  grid-template-columns: 100px 27px 274px 1fr 30px;
  padding-right: 10px;
  color: var(--muted);
}
.warn .note {
  font-size: 13px;
}
.reg {
  width: 63px;
  border-radius: 4px;
  background: var(--green);
  color: #bdbce0;
  font-weight: 500;
  line-height: 25px;
  text-align: center;
}
.reg.crimson {
  background: var(--crimson);
}
.bang {
  width: 18px;
  border-radius: 50%;
  background: #ad3d2c;
  color: #bdb3d4;
  font-size: 12px;
  font-weight: 700;
  line-height: 18px;
  text-align: center;
}
.place {
  flex: 1 1 0;
  color: var(--muted);
  font-size: 13px;
  line-height: 18px;
}
.place-top {
  display: flex;
  align-items: center;
  gap: 11px;
  height: 20px;
}
.place-top b {
  color: var(--ink);
  font-size: 16px;
}
.flag {
  width: 23px;
  height: 15px;
}
.query {
  width: 20px;
  margin-right: 387px;
  border-radius: 50%;
  background: var(--navy);
  color: #b2b1d8;
  font-size: 13px;
  font-weight: 700;
  line-height: 20px;
  text-align: center;
}
.pill {
  display: flex;
  align-items: center;
  gap: 4px;
  height: 31px;
  padding: 0 12px;
  border-radius: 16px;
  background: #a6a5d9;
  color: var(--blue);
  font-weight: 500;
}
.pill.small {
  font-size: 13px;
}
.pill svg {
  width: 14px;
  height: 14px;
}
.license {
  justify-content: space-between;
  color: #ab3d2b;
}
.license span {
  font-size: 16px;
  font-weight: 500;
}
.license b {
  font-size: 13px;
}
.license.overdue {
  color: var(--red);
  background: #b1a9cc;
}

.head {
  display: flex;
  align-items: center;
  justify-content: space-between;
  height: 48px;
  margin-bottom: 9px;
}
.situation {
  overflow: hidden;
  border: 1px solid var(--line);
  border-radius: 12px;
}
.maps {
  display: grid;
  grid-template-columns: 1fr 1fr;
  box-shadow: 0 1px 4px #a09fcc;
}
.maps figure + figure {
  border-left: 1px solid #8c8bc0;
}
.chart {
  display: block;
  width: 100%;
  height: 361px;
}
.blank {
  background: #5e679b;
}
.grid-label {
  fill: #8180b0;
  font: 30px "DejaVu Sans", sans-serif;
}
figcaption {
  height: 26px;
  background: #b3b2da;
  color: #444a98;
  line-height: 26px;
  text-align: center;
}
.pdf {
  display: flex;
  align-items: center;
  gap: 15px;
  height: 51px;
  padding-left: 384px;
  font-weight: 500;
}
.pdf svg {
  width: 26px;
  height: 33px;
}
.pdf text {
  fill: #b9aed0;
  font-size: 8px;
  font-weight: 700;
}
.compose {
  display: flex;
  justify-content: flex-end;
  height: 42px;
  margin-top: 88px;
  padding: 0 18px;
  border: 1px solid var(--line);
  border-radius: 10px;
  background: var(--card);
  color: var(--blue);
  font-weight: 500;
}
.post {
  position: relative;
  margin-top: 14px;
  padding: 12px 12px 8px;
  border: 1px solid var(--line);
  border-radius: 10px;
  background: var(--card);
  box-shadow: 0 1px 3px #a3a2d0;
  font-size: 16px;
  line-height: 22px;
}
.intro {
  margin-top: 30px;
  padding-top: 50px;
}
.post > .more {
  position: absolute;
  top: 14px;
  right: 10px;
}
.post > ul {
  margin: 12px 0;
  padding-left: 20px;
  list-style: disc;
  line-height: 30px;
}
.post li a {
  color: var(--blue);
}
.post > footer {
  display: flex;
  align-items: center;
  gap: 15px;
  margin-top: 12px;
  padding-right: 5px;
  color: var(--blue);
  font-size: 14px;
}
.intro > footer {
  margin-top: 16px;
}
.post footer time {
  margin-left: auto;
  color: #474a98;
  font-size: 13px;
  font-weight: 500;
}
.post footer button {
  display: flex;
  align-items: center;
  gap: 3px;
  font-weight: 500;
}
.post footer button svg {
  width: 17px;
  height: 17px;
}
.who {
  display: flex;
  align-items: center;
  gap: 8px;
  height: 27px;
  padding: 0 12px 0 0;
  border: 1px solid #97a0cb;
  border-radius: 14px;
  background: #a3a8d0;
  color: #414f8a;
  font-size: 13px;
  font-weight: 500;
}
.who svg {
  width: 25px;
  height: 25px;
}
.who circle {
  fill: #afb0d7;
  stroke: #9aa0cb;
}
.who em {
  width: 25px;
  border-radius: 50%;
  background: #a9a29f;
  color: #5b5560;
  font-size: 8px;
  font-style: normal;
  font-weight: 500;
  line-height: 25px;
  text-align: center;
}
.allen {
  border-color: #a3a1c3;
  background: #acaac8;
  color: #5c5a75;
}

.radar {
  position: relative;
  overflow: hidden;
  height: 451px;
  border: 1px solid #a5a4d4;
  border-radius: 10px;
  background: #a5a4d4;
}
.terrain {
  display: block;
  width: 100%;
  height: 100%;
}
.terrain text {
  paint-order: stroke;
  stroke: #a9a8d8;
  stroke-width: 3px;
}
.terrain .country {
  fill: #262856;
  font-size: 18px;
  font-weight: 500;
}
.terrain .city {
  fill: #4a4b7a;
  font-size: 15px;
}
.terrain .sea {
  fill: #332fae;
  stroke: none;
  font-size: 14px;
}
.play {
  position: absolute;
  top: 186px;
  left: calc(50% - 39px);
  width: 76px;
  height: 76px;
  border-radius: 50%;
  background: #b2b1d8;
  box-shadow: 0 0 34px 6px rgba(66, 64, 150, 0.6);
  color: #7472ba;
}
.play svg {
  display: block;
  width: 24px;
  height: 34px;
  margin: 0 0 0 29px;
}
.load {
  position: absolute;
  right: 7px;
  bottom: 5px;
  left: 7px;
  height: 38px;
  border-radius: 8px;
  background: #b2b1d8;
  box-shadow: 0 0 8px rgba(66, 64, 150, 0.4);
  color: #4a48a0;
  font-size: 16px;
}

.brand {
  display: flex;
  align-items: center;
  justify-content: center;
  gap: 8px;
  margin-top: auto;
  padding: 0 9px 27px 0;
  color: #9998bf;
}
.brand svg {
  width: 37px;
  height: 36px;
}
.brand span {
  font: 800 22px/32px "Open Sans", sans-serif;
}
.fab {
  position: absolute;
  right: 19px;
  bottom: 19px;
  width: 45px;
  height: 45px;
  border: 1px solid #9c9bd8;
  border-radius: 50%;
  background: #a6a5d9;
  box-shadow: 0 2px 4px #9f9ece;
  color: var(--blue);
}
.fab svg {
  display: block;
  width: 20px;
  height: 20px;
  margin: auto;
}

.palette {
  position: absolute;
  top: 36px;
  left: 50%;
  width: 373px;
  margin-left: -186px;
}
.find {
  display: block;
  width: 372px;
  height: 64px;
  padding: 0 40px 0 50px;
  border: 2px solid #3d37cf;
  border-radius: 32px;
  outline: 0;
  background: #fff;
  box-shadow: 0 0 14px rgba(50, 45, 130, 0.5), 0 0 400px 40px rgba(30, 30, 60, 0.25);
  color: #1a1b2e;
  font: 400 22px/30px Roboto, sans-serif;
}
.find::placeholder {
  color: #8e91b8;
  opacity: 1;
}
.results {
  position: relative;
  height: 750px;
  margin-top: 15px;
  overflow: hidden;
  border: 1px solid #dcd5ef;
  border-radius: 18px;
  background: #fff;
}
.palette::before {
  content: "";
  position: absolute;
  inset: 79px 0 0;
  border-radius: 18px;
  box-shadow: 0 0 24px rgba(85, 80, 185, 0.55);
}
.group h4 {
  height: 37px;
  padding: 0 12px;
  border-bottom: 1px solid #dfdaef;
  background: #fbf9ff;
  color: #4a4f7a;
  font-size: 14px;
  font-weight: 500;
  line-height: 38px;
}
.group + .group {
  border-top: 1px solid #dfdaef;
  margin-top: -1px;
}
.command {
  display: flex;
  align-items: center;
  justify-content: space-between;
  width: 100%;
  height: 38px;
  padding: 0 13px 0 12px;
  color: #1a1b2b;
  font-size: 16px;
  font-weight: 500;
}
.keys {
  display: flex;
  gap: 4px;
  margin-bottom: 5px;
}
kbd {
  width: 23px;
  border-radius: 10px;
  background: #f4f1fa;
  color: #4a4f7a;
  font: 500 15px/23px Roboto, sans-serif;
  text-align: center;
}
.scroll {
  position: absolute;
  top: 0;
  right: 3px;
  width: 4px;
  height: 226px;
  border-radius: 2px;
  background: rgba(90, 90, 130, 0.45);
}
</style>
